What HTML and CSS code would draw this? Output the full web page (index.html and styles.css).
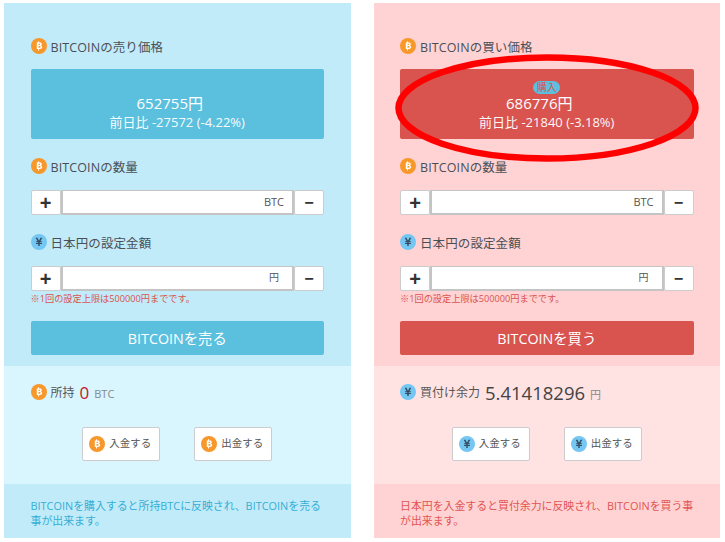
FILE: index.html
```html
<!DOCTYPE html>
<html lang="ja">
<head>
<meta charset="utf-8">
<title>BITCOIN</title>
<link rel="stylesheet" href="styles.css">
</head>
<body>
<svg width="0" height="0" class="defs">
  <symbol id="btc" viewBox="0 0 16 16">
    <circle cx="8" cy="8" r="8" fill="#f8982a"/>
    <path d="M5.800 4.400h3c1.300 0 2 .6 2 1.600 0 .7-.4 1.200-1 1.400.8.200 1.400.8 1.400 1.600 0 1.200-.9 1.900-2.300 1.900H5.800zM7.500 5.700v1.300h1c.5 0 .7-.2.7-.650s-.2-.650-.7-.650zM7.500 8.100v1.600h1.200c.6 0 .9-.3.900-.8s-.3-.8-.9-.8zM7.100 3.200h1v1.300h-1zM7.100 11.100h1v1.500h-1z" fill="#fff" fill-rule="evenodd"/>
  </symbol>
  <symbol id="yen" viewBox="0 0 16 16">
    <circle cx="8" cy="8" r="8" fill="#74c7f2"/>
    <path d="M4.700 3.800h1.700L8 6.800l1.600-3h1.700L9.400 7.200h1.500v1H8.700v.7h2.200v1H8.700v2.100H7.300V9.900H5.100v-1h2.200v-.7H5.100v-1h1.500z" fill="#34495e"/>
  </symbol>
</svg>
<main class="page">
  <section class="panel sell">
    <div class="main">
      <h2 class="label"><svg class="ico"><use href="#btc"/></svg>BITCOINの売り価格</h2>
      <div class="price">
        <div class="amount">652755円</div>
        <div class="change">前日比 -27572 (-4.22%)</div>
      </div>
      <h2 class="label gap1"><svg class="ico"><use href="#btc"/></svg>BITCOINの数量</h2>
      <div class="stepper">
        <button class="step">+</button>
        <div class="input"><span>BTC</span></div>
        <button class="step minus">−</button>
      </div>
      <h2 class="label gap2"><svg class="ico"><use href="#yen"/></svg>日本円の設定金額</h2>
      <div class="stepper">
        <button class="step">+</button>
        <div class="input yen-unit"><span>円</span></div>
        <button class="step minus">−</button>
      </div>
      <p class="note">※1回の設定上限は500000円までです。</p>
      <button class="submit">BITCOINを売る</button>
    </div>
    <div class="hold">
      <div class="balance">
        <svg class="ico"><use href="#btc"/></svg><span class="bal-label">所持</span><span class="bal-zero">0</span><span class="bal-unit">BTC</span>
      </div>
      <div class="actions">
        <button class="action"><svg class="ico"><use href="#btc"/></svg><span class="action-text">入金する</span></button>
        <button class="action"><svg class="ico"><use href="#btc"/></svg><span class="action-text">出金する</span></button>
      </div>
    </div>
    <p class="foot">BITCOINを購入すると所持BTCに反映され、BITCOINを売る事が出来ます。</p>
  </section>
  <section class="panel buy">
    <div class="main">
      <h2 class="label"><svg class="ico"><use href="#btc"/></svg>BITCOINの買い価格</h2>
      <div class="price">
        <span class="badge">購入</span>
        <div class="amount">686776円</div>
        <div class="change">前日比 -21840 (-3.18%)</div>
      </div>
      <h2 class="label gap1"><svg class="ico"><use href="#btc"/></svg>BITCOINの数量</h2>
      <div class="stepper">
        <button class="step">+</button>
        <div class="input"><span>BTC</span></div>
        <button class="step minus">−</button>
      </div>
      <h2 class="label gap2"><svg class="ico"><use href="#yen"/></svg>日本円の設定金額</h2>
      <div class="stepper">
        <button class="step">+</button>
        <div class="input yen-unit"><span>円</span></div>
        <button class="step minus">−</button>
      </div>
      <p class="note">※1回の設定上限は500000円までです。</p>
      <button class="submit">BITCOINを買う</button>
    </div>
    <div class="hold">
      <div class="balance">
        <svg class="ico"><use href="#yen"/></svg><span class="bal-label">買付け余力</span><span class="bal-num">5.41418296</span><span class="bal-unit">円</span>
      </div>
      <div class="actions">
        <button class="action"><svg class="ico"><use href="#yen"/></svg><span class="action-text">入金する</span></button>
        <button class="action"><svg class="ico"><use href="#yen"/></svg><span class="action-text">出金する</span></button>
      </div>
    </div>
    <p class="foot">日本円を入金すると買付余力に反映され、BITCOINを買う事が出来ます。</p>
    <svg class="oval" viewBox="0 0 304 108"><ellipse cx="152" cy="54" rx="148.500" ry="50.500"/></svg>
  </section>
</main>
</body>
</html>
```
FILE: styles.css
```css
* { box-sizing: border-box; }
html, body { margin: 0; padding: 0; }
body {
  width: 725px;
  height: 542px;
  overflow: hidden;
  background: #fff;
  color: #444;
  font-family: "Open Sans", "Noto Sans CJK JP", sans-serif;
  font-size: 13px;
}
.defs { position: absolute; }
.page {
  display: flex;
  gap: 23px;
  padding: 3px 5px 0 4px;
}
.panel {
  position: relative;
  width: 347px;
  height: 535px;
  display: flex;
  flex-direction: column;
}
.main { height: 363px; padding: 33px 26.500px 0; }
.hold { height: 118px; padding: 14px 26.500px 0; }
.foot {
  height: 54px;
  margin: 0;
  padding: 14px 26.500px 0;
  font-size: 10.900px;
  line-height: 15px;
}
.sell .main, .sell .foot { background: #c1ebf9; }
.sell .hold { background: #d9f5fe; }
.buy .main, .buy .foot { background: #ffd3d3; }
.buy .hold { background: #ffe3e3; }
.sell .foot { color: #35aed6; }
.buy .foot { color: #e25353; }
.label {
  display: flex;
  align-items: center;
  gap: 4px;
  height: 20px;
  margin: 0;
  font-size: 12.500px;
  letter-spacing: .1px;
  font-weight: 400;
  color: #4a4f55;
}
.ico { width: 16px; height: 16px; flex: none; }
.price {
  position: relative;
  height: 70px;
  margin-top: 13px;
  padding-top: 23px;
  border-radius: 2px;
  text-align: center;
  color: #fff;
}
.sell .price, .sell .submit { background: #5bc0de; }
.buy .price, .buy .submit { background: #d9534f; }
.amount { font-size: 15px; line-height: 22px; padding-right: 15px; }
.change { font-size: 13px; line-height: 17px; opacity: .95; }
.badge {
  position: absolute;
  top: 12px;
  left: 50%;
  width: 27px;
  height: 13px;
  margin-left: -13.500px;
  border-radius: 7px;
  background: #5bc0de;
  color: #d9534f;
  font-size: 10px;
  line-height: 13px;
}
.gap1 { margin-top: 17px; }
.gap2 { margin-top: 17px; }
.stepper {
  display: flex;
  height: 25px;
  margin-top: 14px;
}
.step {
  width: 30px;
  padding: 0;
  border: 1px solid #ccc;
  border-radius: 2px;
  background: #fff;
  color: #333;
  font-family: "Liberation Sans", sans-serif;
  font-size: 20px;
  font-weight: 700;
  line-height: 20px;
}
.minus { font-size: 16px; }
.input {
  flex: 1;
  padding-right: 8px;
  border-style: solid;
  border-color: #c4c4c4;
  border-width: 1px 2px 2px 2px;
  background: #fff;
  text-align: right;
  font-size: 11px;
  line-height: 21px;
  color: #555;
}
.yen-unit { padding-right: 13px; font-size: 10px; }
.note {
  margin: 0;
  height: 15px;
  color: #d9534f;
  font-size: 9.200px;
  line-height: 15px;
}
.submit {
  display: block;
  width: 100%;
  height: 34px;
  margin-top: 15px;
  padding: 0 0 2px;
  border: 0;
  border-radius: 2px;
  color: #fff;
  font: inherit;
  font-size: 14.300px;
}
.balance { display: flex; align-items: center; height: 24px; color: #555; }
.bal-label { margin-left: 4px; font-size: 12px; }
.bal-zero { margin-left: 5px; font-size: 17px; font-weight: 400; color: #c9151e; }
.bal-num { margin-left: 5px; font-size: 18.500px; color: #444; }
.bal-unit { margin-left: 5px; margin-top: 3px; font-size: 11px; color: #888; }
.actions {
  display: flex;
  justify-content: center;
  gap: 34px;
  margin-top: 23px;
}
.action {
  display: flex;
  align-items: center;
  gap: 4px;
  width: 78px;
  height: 34px;
  padding: 0 0 0 6px;
  border: 1px solid #ccc;
  border-radius: 2px;
  background: #fff;
  color: #555;
  font: inherit;
  font-size: 10.500px;
}
.action-text { margin-bottom: 3px; }
.oval {
  position: absolute;
  left: 21px;
  top: 51px;
  width: 304px;
  height: 108px;
}
.oval ellipse { fill: none; stroke: #f00; stroke-width: 6.500; }
```
